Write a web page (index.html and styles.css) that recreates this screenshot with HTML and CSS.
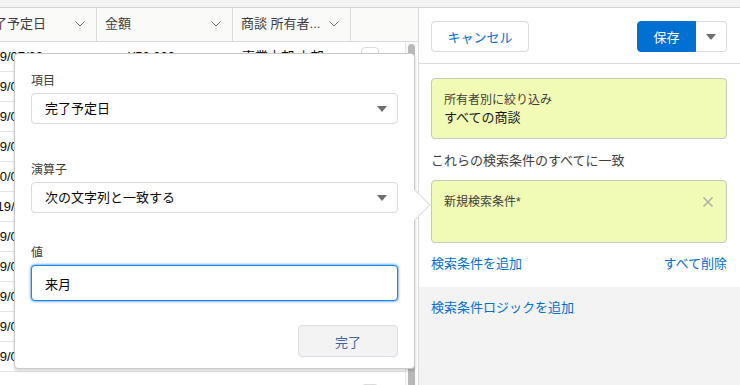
FILE: index.html
```html
<!doctype html>
<html lang="ja">

<head>
  <meta charset="UTF-8" />
  <meta name="viewport" content="width=device-width, initial-scale=1" />
  <title>商談 検索条件</title>
  <link rel="stylesheet" href="styles.css">
</head>

<body>
  <div class="topbar"></div>

  <div class="main">
    <!-- List view -->
    <div class="list">
      <div class="grid-head">
        <div class="head-cell"><span>完了予定日</span><svg class="chev" width="10" height="6" viewBox="0 0 10 6"><path d="M0.5 0.5L5 5L9.5 0.5" /></svg></div>
        <div class="head-cell"><span>金額</span><svg class="chev" width="10" height="6" viewBox="0 0 10 6"><path d="M0.5 0.5L5 5L9.5 0.5" /></svg></div>
        <div class="head-cell"><span>商談 所有者...</span><svg class="chev" width="10" height="6" viewBox="0 0 10 6"><path d="M0.5 0.5L5 5L9.5 0.5" /></svg></div>
        <div class="head-cell last"></div>
      </div>

      <div class="grid-body">
        <div class="rows">
          <div class="row"><div class="cell date">2019/07/20</div><div class="cell amount">¥50,000</div><div class="cell owner">事業本部 上部</div><div class="cell act"><span class="row-btn"></span></div></div>
          <div class="row"><div class="cell date">2019/09/30</div><div class="cell amount">¥120,000</div><div class="cell owner">事業本部 上部</div><div class="cell act"><span class="row-btn"></span></div></div>
          <div class="row"><div class="cell date">2019/09/12</div><div class="cell amount">¥80,000</div><div class="cell owner">事業本部 上部</div><div class="cell act"><span class="row-btn"></span></div></div>
          <div class="row"><div class="cell date">2019/09/05</div><div class="cell amount">¥35,000</div><div class="cell owner">事業本部 上部</div><div class="cell act"><span class="row-btn"></span></div></div>
          <div class="row"><div class="cell date">2020/01/15</div><div class="cell amount">¥200,000</div><div class="cell owner">事業本部 上部</div><div class="cell act"><span class="row-btn"></span></div></div>
          <div class="row"><div class="cell date short">2019/11/08</div><div class="cell amount">¥64,000</div><div class="cell owner">事業本部 上部</div><div class="cell act"><span class="row-btn"></span></div></div>
          <div class="row"><div class="cell date">2019/09/25</div><div class="cell amount">¥90,000</div><div class="cell owner">事業本部 上部</div><div class="cell act"><span class="row-btn"></span></div></div>
          <div class="row"><div class="cell date">2019/09/18</div><div class="cell amount">¥45,000</div><div class="cell owner">事業本部 上部</div><div class="cell act"><span class="row-btn"></span></div></div>
          <div class="row"><div class="cell date">2019/09/02</div><div class="cell amount">¥70,000</div><div class="cell owner">事業本部 上部</div><div class="cell act"><span class="row-btn"></span></div></div>
          <div class="row"><div class="cell date">2019/09/27</div><div class="cell amount">¥150,000</div><div class="cell owner">事業本部 上部</div><div class="cell act"><span class="row-btn"></span></div></div>
          <div class="row"><div class="cell date">2019/09/10</div><div class="cell amount">¥30,000</div><div class="cell owner">事業本部 上部</div><div class="cell act"><span class="row-btn"></span></div></div>
          <div class="row tail"><div class="cell date"></div><div class="cell amount"></div><div class="cell owner">事業本部 上部</div><div class="cell act"><span class="row-btn"></span></div></div>
        </div>
        <div class="scrollbar"><div class="thumb"></div></div>
      </div>

      <!-- Filter edit popover -->
      <div class="popover">
        <div class="field field-first">
          <label class="field-label">項目</label>
          <div class="select">完了予定日</div>
        </div>
        <div class="field field-second">
          <label class="field-label">演算子</label>
          <div class="select">次の文字列と一致する</div>
        </div>
        <div class="field">
          <label class="field-label">値</label>
          <input class="text-input" type="text" value="来月" />
        </div>
        <div class="popover-foot">
          <button class="done-button">完了</button>
        </div>
        <span class="popover-nub"></span>
      </div>
    </div>

    <!-- Filter panel -->
    <aside class="filters">
      <div class="filters-head">
        <button class="btn-neutral">キャンセル</button>
        <div class="btn-group">
          <button class="btn-brand">保存</button>
          <button class="btn-menu"><span class="tri"></span></button>
        </div>
      </div>

      <div class="filters-body">
        <div class="filter-card">
          <div class="filter-label">所有者別に絞り込み</div>
          <div class="filter-value">すべての商談</div>
        </div>

        <p class="match-text">これらの検索条件のすべてに一致</p>

        <div class="filter-card filter-new">
          <div class="filter-label">新規検索条件*</div>
          <svg class="remove" width="10" height="10" viewBox="0 0 10 10"><path d="M0.5 0.5L9.5 9.5M9.5 0.5L0.5 9.5" /></svg>
        </div>

        <div class="filter-links">
          <a class="link" href="#">検索条件を追加</a>
          <a class="link" href="#">すべて削除</a>
        </div>
      </div>

      <div class="filters-logic">
        <a class="link" href="#">検索条件ロジックを追加</a>
      </div>
    </aside>
  </div>
</body>

</html>
```

FILE: styles.css
```css
body {
  margin: 0;
  height: 385px;
  overflow: hidden;
  font-family: "Liberation Sans", "Noto Sans CJK JP", sans-serif;
  font-size: 13px;
  line-height: 18px;
  color: #3e3e3c;
  background-color: white;
}

button {
  font-family: inherit;
  font-size: 13px;
  cursor: pointer;
}

.topbar {
  height: 7px;
  background-color: #f3f3f3;
  border-bottom: 1px solid #d4d4d4;
}

.main {
  display: flex;
  height: 377px;
  overflow: hidden;
}

/* list view */

.list {
  position: relative;
  width: 418px;
  flex: none;
}

.grid-head {
  display: grid;
  grid-template-columns: 121px 136px 118px 67px;
  margin-left: -24px;
  height: 33px;
  background-color: #fafaf9;
  border-bottom: 1px solid #dddbda;
}

.head-cell {
  display: flex;
  justify-content: space-between;
  align-items: center;
  padding: 0 11px 2px 8px;
  border-right: 1px solid #dddbda;
  color: #3e3e3c;
}

.head-cell:first-child {
  padding-left: 5px;
}

.head-cell.last {
  border-right: none;
}

.chev path {
  fill: none;
  stroke: #706e6b;
}

.grid-body {
  display: flex;
  height: 343px;
  overflow: hidden;
}

.rows {
  display: flex;
  flex-direction: column;
  width: 429px;
  flex: none;
  margin-left: -24px;
}

.row {
  display: grid;
  grid-template-columns: 121px 136px 118px 54px;
  height: 29px;
  flex: none;
  border-bottom: 1px solid #e5e5e5;
  align-items: center;
}

.row.tail {
  margin-top: 2px;
  padding-top: 5px;
}

.cell {
  white-space: nowrap;
  overflow: hidden;
  color: #080707;
}

.date {
  padding-left: 2px;
}

.date.short {
  padding-left: 6px;
}

.amount {
  padding-left: 31px;
}

.owner {
  padding-left: 9px;
}

.act {
  padding-left: 10px;
}

.row-btn {
  display: block;
  width: 16px;
  height: 18px;
  border: 1px solid #dddbda;
  border-radius: 4px;
}

.scrollbar {
  width: 12px;
  flex: none;
  background-color: #fafafa;
  border-left: 1px solid #e8e8e8;
  padding-top: 2px;
  box-sizing: border-box;
}

.thumb {
  width: 7px;
  height: 400px;
  margin-left: 2px;
  border-radius: 4px;
  background-color: #b8b8b8;
}

/* popover */

.popover {
  position: absolute;
  top: 45px;
  left: 14px;
  width: 367px;
  height: 284px;
  padding: 19px 16px 11px;
  background-color: white;
  border: 1px solid #c9c9c9;
  border-radius: 4px;
  box-shadow: 0 2px 3px rgba(0, 0, 0, 0.16);
  z-index: 5;
}

.field-label {
  display: block;
  font-size: 12px;
  line-height: 16px;
  margin-bottom: 4px;
  color: #3e3e3c;
}

.field-first {
  margin-bottom: 38px;
}

.field-second {
  margin-bottom: 32px;
}

.select {
  position: relative;
  height: 29px;
  line-height: 29px;
  padding-left: 13px;
  border: 1px solid #dddbda;
  border-radius: 4px;
  color: #080707;
}

.select::after {
  content: "";
  position: absolute;
  right: 10px;
  top: 12px;
  border-left: 5px solid transparent;
  border-right: 5px solid transparent;
  border-top: 6px solid #706e6b;
}

.text-input {
  display: block;
  width: 100%;
  height: 36px;
  padding: 0 13px;
  box-sizing: border-box;
  font-family: inherit;
  font-size: 13px;
  color: #080707;
  border: 1px solid #1589ee;
  border-radius: 4px;
  box-shadow: 0 0 3px #0070d2;
  outline: none;
}

.popover-foot {
  display: flex;
  justify-content: flex-end;
  margin-top: 24px;
}

.done-button {
  width: 100px;
  height: 32px;
  background-color: #f3f3f3;
  border: 1px solid #d8dde6;
  border-radius: 4px;
  color: #3f64a2;
}

.popover-nub {
  position: absolute;
  left: 389px;
  top: 140px;
  width: 22px;
  height: 22px;
  background-color: white;
  border-top: 1px solid #d8dde6;
  border-right: 1px solid #d8dde6;
  box-sizing: border-box;
  transform: rotate(45deg);
}

/* filter panel */

.filters {
  flex: 1;
  display: flex;
  flex-direction: column;
  border-left: 1px solid #dddbda;
  background-color: #f3f3f3;
}

.filters-head {
  display: flex;
  justify-content: space-between;
  height: 42px;
  padding: 13px 13px 0 12px;
  background-color: white;
  border-bottom: 1px solid #dddbda;
}

.btn-neutral {
  width: 98px;
  height: 31px;
  background-color: white;
  border: 1px solid #dddbda;
  border-radius: 4px;
  color: #0070d2;
}

.btn-group {
  display: flex;
}

.btn-brand {
  width: 59px;
  height: 31px;
  background-color: #0070d2;
  border: 1px solid #0070d2;
  border-radius: 4px 0 0 4px;
  color: white;
}

.btn-menu {
  width: 31px;
  height: 31px;
  background-color: white;
  border: 1px solid #dddbda;
  border-left: none;
  border-radius: 0 4px 4px 0;
  display: flex;
  align-items: center;
  justify-content: center;
  padding: 0;
}

.tri {
  border-left: 5px solid transparent;
  border-right: 5px solid transparent;
  border-top: 6px solid #706e6b;
}

.filters-body {
  background-color: white;
  padding: 14px 13px 14px 12px;
}

.filter-card {
  height: 35px;
  padding: 12px 13px 12px 12px;
  background-color: #f2fbb6;
  border: 1px solid #c9c7c5;
  border-radius: 4px;
}

.filter-label {
  font-size: 12px;
  color: #3e3e3c;
}

.filter-value {
  color: #181818;
}

.filter-new {
  display: flex;
  justify-content: space-between;
  align-items: flex-start;
  height: 37px;
}

.remove {
  margin-top: 4px;
}

.remove path {
  stroke: #b0adab;
  stroke-width: 1.5;
}

.match-text {
  margin: 13px 0 10px;
  color: #3e3e3c;
}

.filter-links {
  display: flex;
  justify-content: space-between;
  margin-top: 12px;
}

.link {
  color: #0070d2;
  text-decoration: none;
}

.filters-logic {
  padding: 12px;
}
```
